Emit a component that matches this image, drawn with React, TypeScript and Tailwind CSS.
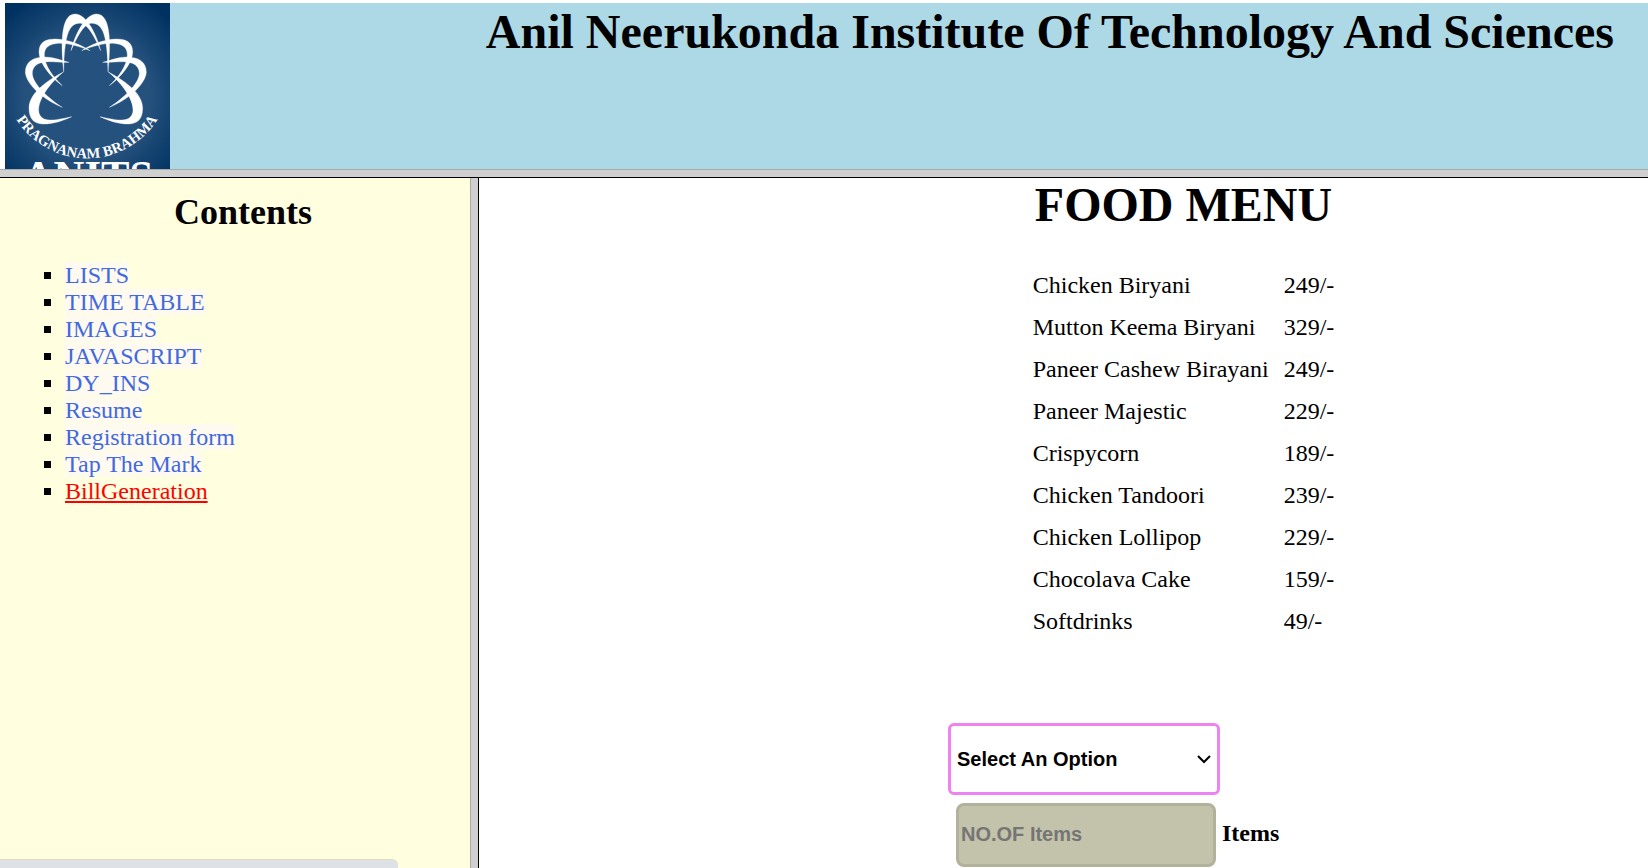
const links = [
  'LISTS',
  'TIME TABLE',
  'IMAGES',
  'JAVASCRIPT',
  'DY_INS',
  'Resume',
  'Registration form',
  'Tap The Mark',
];

const menu: [string, string][] = [
  ['Chicken Biryani', '249/-'],
  ['Mutton Keema Biryani', '329/-'],
  ['Paneer Cashew Birayani', '249/-'],
  ['Paneer Majestic', '229/-'],
  ['Crispycorn', '189/-'],
  ['Chicken Tandoori', '239/-'],
  ['Chicken Lollipop', '229/-'],
  ['Chocolava Cake', '159/-'],
  ['Softdrinks', '49/-'],
];

function Petals() {
  return (
    <>
      <path d="M191 215C184 150 178 42 225 42C262 42 292 110 302 152C284 112 264 72 242 70C205 68 193 110 191 215Z" />
      <path d="M187 257C150 230 117 188 117 155C117 125 140 117 165 117C205 118 245 135 270 152C240 140 205 129 175 130C148 132 133 142 133 165C133 195 160 232 187 257Z" />
      <path d="M207 187C180 180 160 171 135 171C100 171 76 185 76 217C78 252 130 300 187 322C150 299 97 252 97 220C97 197 115 186 145 185C165 185 185 188 207 187Z" />
      <path d="M191 215C150 238 87 275 87 325C87 360 105 372 130 372C160 372 190 362 215 350C185 357 165 360 150 360C128 360 116 348 116 330C116 290 160 240 191 215Z" />
    </>
  );
}

function Logo() {
  return (
    <svg viewBox="15 9 495 498" className="block h-[166px] w-[165px] shrink-0" role="img" aria-label="ANITS">
      <defs>
        <radialGradient id="glow" gradientUnits="userSpaceOnUse" cx="262" cy="290" r="340">
          <stop offset="0" stopColor="#25517f" />
          <stop offset="0.55" stopColor="#25517d" />
          <stop offset="1" stopColor="#003261" />
        </radialGradient>
        <path id="motto" d="M44 350A251 251 0 0 0 478 350" />
      </defs>
      <rect x="15" y="9" width="495" height="498" fill="url(#glow)" />
      <g fill="#fff" stroke="#fff" strokeWidth="1" strokeLinejoin="round">
        <Petals />
        <g transform="translate(515 0) scale(-1 1)">
          <Petals />
        </g>
      </g>
      <g fill="#fff" fontFamily="'Liberation Serif', serif" fontWeight="700">
        <text fontSize="44">
          <textPath href="#motto" startOffset="50%" textAnchor="middle">
            PRAGNANAM BRAHMA
          </textPath>
        </text>
        <text x="264" y="570" fontSize="128" textAnchor="middle">
          ANITS
        </text>
      </g>
    </svg>
  );
}

export default function App() {
  return (
    <div className="relative flex min-h-screen flex-col bg-white font-['Liberation_Serif',serif] text-2xl text-black">
      <header className="border-b border-black">
        <div className="pt-[3px] pl-[5px]">
          <div className="flex items-start justify-between bg-[#add8e6]">
            <Logo />
            <h1 className="pt-0.5 pr-[34px] text-[48px] leading-[54px] font-bold">
              Anil Neerukonda Institute Of Technology And Sciences
            </h1>
          </div>
        </div>
        <div className="h-2 border-t border-[#a9a9a9] bg-[#d0d0d0]" />
      </header>

      <div className="flex flex-1">
        <nav className="w-[470px] shrink-0 bg-[#ffffdf] pt-[13px]">
          <h2 className="pl-4 text-center text-[36px] leading-[42px] font-bold">Contents</h2>
          <ul className="mt-[29px] list-[square] pl-[65px] leading-[27px]">
            {links.map((label) => (
              <li key={label}>
                <a href="#" className="bg-[#fffaf0] text-[#4169e1]">
                  {label}
                </a>
              </li>
            ))}
            <li>
              <a href="#" className="text-[#ff0000] underline">
                BillGeneration
              </a>
            </li>
          </ul>
        </nav>
        <div className="w-[9px] shrink-0 border-r border-l border-r-black border-l-[#a9a9a9] bg-[#d0d0d0]" />

        <main className="flex-1 pl-60">
          <h1 className="text-center text-[48px] leading-[54px] font-bold">FOOD MENU</h1>
          <table className="mx-auto mt-8">
            <tbody>
              {menu.map(([name, price]) => (
                <tr key={name} className="h-[42px]">
                  <td className="p-0 pr-[15px]">{name}</td>
                  <td className="p-0">{price}</td>
                </tr>
              ))}
            </tbody>
          </table>

          <form className="mx-auto mt-[81px] w-[471px]">
            <div className="relative w-[272px]">
              <select
                aria-label="Dish"
                className="block h-[72px] w-full appearance-none rounded-md border-[3px] border-[#ee82ee] bg-white px-1.5 font-['Liberation_Sans',sans-serif] text-xl font-bold"
              >
                <option>Select An Option</option>
                {menu.map(([name]) => (
                  <option key={name}>{name}</option>
                ))}
              </select>
              <svg
                viewBox="0 0 14 9"
                className="pointer-events-none absolute top-8 right-[9px] h-[9px] w-[14px]"
                fill="none"
                stroke="#000"
                strokeWidth="2"
              >
                <path d="M1 1L7 7L13 1" />
              </svg>
            </div>
            <div className="mt-2 ml-2 flex items-center gap-1.5">
              <input
                id="count"
                placeholder="NO.OF Items"
                className="h-16 w-[260px] rounded-lg border-[3px] border-[#b2b19c] bg-[#c3c2aa] px-0.5 pb-0.5 font-['Liberation_Sans',sans-serif] text-xl font-bold placeholder:text-[#757575]"
              />
              <label htmlFor="count" className="pb-1 font-bold">
                Items
              </label>
            </div>
          </form>
        </main>
      </div>

      <div className="absolute bottom-0 left-0 h-[9px] w-[398px] rounded-tr-md border-t border-[#dfddbf] bg-[#dee1e6]" />
    </div>
  );
}
